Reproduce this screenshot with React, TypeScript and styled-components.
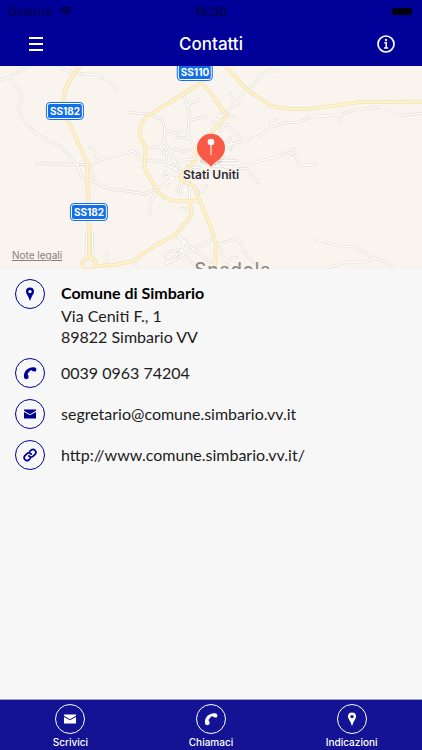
import React from "react";
import styled, { createGlobalStyle } from "styled-components";

const GlobalStyle = createGlobalStyle`
  *, *::before, *::after { box-sizing: border-box; }
  body { margin: 0; background: #f7f7f7; font-family: Inter, "Liberation Sans", sans-serif; }
`;

const Screen = styled.div`
  display: flex;
  flex-direction: column;
  min-height: 100vh;
`;

const Header = styled.header`
  background: #000099;
  color: #fff;
`;

const StatusBar = styled.div`
  display: grid;
  grid-template-columns: 1fr auto 1fr;
  align-items: center;
  height: 22px;
  padding: 0 8px;
  color: #000040;
  font-size: 12px;
`;

const Carrier = styled.span`
  display: flex;
  align-items: center;
  gap: 6px;
`;

const Clock = styled.time`
  font-weight: 600;
`;

const Battery = styled.span`
  justify-self: end;
  width: 20px;
  height: 7px;
  margin-right: 2px;
  border-radius: 2px;
  background: #000010;
`;

const NavBar = styled.div`
  display: grid;
  grid-template-columns: 44px 1fr 44px;
  align-items: center;
  height: 44px;
  padding: 0 14px;
`;

const NavButton = styled.button`
  display: flex;
  align-items: center;
  justify-content: center;
  height: 42px;
  padding: 0;
  border: 0;
  background: none;
  color: inherit;
`;

const Title = styled.h1`
  margin: 0;
  text-align: center;
  font-size: 17px;
  font-weight: 500;
  line-height: 42px;
`;

const MapArea = styled.section`
  position: relative;
  height: 203px;
  overflow: hidden;
  background: #f9f4ed;
`;

const MapDrawing = styled.svg`
  display: block;
  width: 100%;
  height: 100%;
`;

const Place = styled.div<{ $x: number; $y: number }>`
  position: absolute;
  left: calc(50% + ${(p) => p.$x}px);
  top: ${(p) => p.$y}px;
  transform: translate(-50%, -50%);
  white-space: nowrap;
`;

const RoadBadge = styled(Place)`
  padding: 0 2px;
  border: 1px solid #fff;
  border-radius: 3px;
  outline: 1px solid #1470e8;
  background: #1470e8;
  color: #fff;
  font-size: 10px;
  font-weight: 700;
  line-height: 14px;
`;

const Town = styled(Place)`
  color: #8f8b88;
  font-size: 18px;
  font-weight: 500;
  line-height: 20px;
  letter-spacing: 1px;
`;

const PinLabel = styled(Place)`
  color: #2b2b30;
  font-size: 12px;
  font-weight: 600;
  line-height: 14px;
  text-shadow: 0 0 2px #fff, 0 0 2px #fff;
`;

const LegalLink = styled.a`
  position: absolute;
  left: 12px;
  bottom: 7px;
  color: #85827e;
  font-size: 10px;
  font-weight: 400;
  line-height: 14px;
`;

const Details = styled.main`
  display: flex;
  flex: 1;
  flex-direction: column;
  gap: 11px;
  padding: 10px 15px;
`;

const Row = styled.div`
  display: flex;
  gap: 16px;
  color: #1c1c1c;
  font-family: Lato, "Liberation Sans", sans-serif;
  font-size: 16px;
  line-height: 21px;
`;

const Circle = styled.span`
  display: flex;
  flex: none;
  align-items: center;
  justify-content: center;
  width: 30px;
  height: 30px;
  border: 1px solid currentColor;
  border-radius: 50%;
`;

const RowIcon = styled(Circle)`
  color: #000099;
`;

const Address = styled.address`
  padding-top: 1px;
  font-style: normal;
`;

const Name = styled.h2`
  margin: 0;
  color: #000;
  font-size: 16px;
  font-weight: 700;
  line-height: 25px;
`;

const ContactLink = styled.a`
  color: inherit;
  line-height: 30px;
  text-decoration: none;
`;

const TabBar = styled.nav`
  display: grid;
  grid-template-columns: repeat(3, 1fr);
  height: 51px;
  border-top: 1px solid #9c9cc4;
  background: #131394;
`;

const Tab = styled.button`
  display: flex;
  flex-direction: column;
  align-items: center;
  gap: 1px;
  padding: 4px 0 0;
  border: 0;
  background: none;
  color: #fff;
  font-family: inherit;
  font-size: 10px;
  font-weight: 500;
  line-height: 14px;
`;

const WifiIcon = () => (
  <svg width="14" height="10" viewBox="0 0 14 10" fill="none" stroke="currentColor" strokeWidth="2" aria-hidden="true">
    <path d="M1 4a8.500 8.500 0 0 1 12 0M3.200 6.200a5.400 5.400 0 0 1 7.600 0" />
    <path d="M7 9.500 5 7.700a2.900 2.900 0 0 1 4 0z" fill="currentColor" stroke="none" />
  </svg>
);

const MenuIcon = () => (
  <svg width="14" height="14" viewBox="0 0 14 14" stroke="currentColor" strokeWidth="2" aria-hidden="true">
    <path d="M0 1h14M0 7h14M0 13h14" />
  </svg>
);

const InfoIcon = () => (
  <svg width="18" height="18" viewBox="0 0 18 18" fill="none" stroke="currentColor" aria-hidden="true">
    <circle cx="9" cy="9" r="8" strokeWidth="1.700" />
    <path d="M7.300 7.800h1.900v5M7 13h4.200" strokeWidth="1.500" />
    <circle cx="9" cy="5" r="1.200" fill="currentColor" stroke="none" />
  </svg>
);

const PinIcon = () => (
  <svg width="14" height="14" viewBox="0 0 14 14" fill="currentColor" aria-hidden="true">
    <path fillRule="evenodd" d="M7 .5a4 4 0 0 0-4 4C3 6.500 4.600 8 5.500 10.200L7 14l1.500-3.800C9.400 8 11 6.500 11 4.500a4 4 0 0 0-4-4zm0 2.400a1.700 1.700 0 1 1 0 3.400 1.700 1.700 0 0 1 0-3.400z" />
  </svg>
);

const PhoneIcon = () => (
  <svg width="14" height="14" viewBox="0 0 14 14" fill="currentColor" aria-hidden="true">
    <path d="M1.200 12C.3 8.500 1.800 5.200 4.500 3.100 6.700 1.400 9.800.6 12 1.500c1.300.6 1.700 2 1.100 3.200-.4.800-1 1-1.700.8l-2-.6c-.6-.2-.8-.6-1-1C6.600 4.900 5 6.600 4.400 8.300c.5.200.8.500.9 1l.3 1.700c.1.900-.3 1.500-1 1.800-1.200.6-2.900.4-3.400-.8z" />
  </svg>
);

const MailIcon = () => (
  <svg width="14" height="14" viewBox="0 0 14 14" fill="currentColor" aria-hidden="true">
    <path d="M1 2.500h12v1.200L7 7.200 1 3.700z" />
    <path d="M1 4.900l6 3.400 6-3.400v6.600H1z" />
  </svg>
);

const LinkIcon = () => (
  <svg width="14" height="14" viewBox="0 0 24 24" fill="none" stroke="currentColor" strokeWidth="3" strokeLinecap="round" aria-hidden="true">
    <path d="M10 13.500a5 5 0 0 0 7.500.5l3.500-3.500a5 5 0 0 0-7-7L11.500 6" />
    <path d="M14 10.500a5 5 0 0 0-7.500-.5L3 13.500a5 5 0 0 0 7 7l2.500-2.500" />
  </svg>
);

const lanes = [
  "M90 -3 L28 33 C35 58 68 66 66 98 L54 130 C76 190 130 222 184 242 L235 302 L244 335 L285 350 L325 368 L433 383 L468 370 L525 334",
  "M28 33 L0 42",
  "M178 0 C205 25 240 21 295 27 L345 62 L345 73",
  "M110 293 L275 296 L295 284 L400 255 L430 284 L500 286",
  "M268 245 L283 250 L295 283",
  "M272 305 L285 350 M233 302 L245 335",
  "M390 140 L440 143 L485 158 L495 190 L492 225 L512 260 L530 300 L553 318",
  "M553 90 L568 140 L564 205 L584 245 L582 285",
  "M563 116 L598 101 M568 163 L617 152",
  "M492 193 L528 200 L565 190 M528 200 L526 218 M540 214 L572 218",
  "M437 247 L480 242 L495 262 L530 250 L550 258 L570 250 M480 242 L492 228",
  "M500 250 L500 300 L528 308 M515 265 L520 290 L545 282 L590 280",
  "M495 315 L520 340 L495 355 M510 300 L550 325 M520 340 L490 328",
  "M468 370 L450 415 L450 443",
  "M550 330 L530 375 M545 352 L540 383 M570 350 L568 405 M568 362 L610 375 M600 380 L620 360 M545 428 L570 430",
  "M525 507 L633 590 M525 507 L553 525 L545 550 L495 560 L500 594 L633 520",
  "M560 520 L540 560 L500 590 M545 552 L590 608",
  "M400 585 L418 609 M320 560 L321 590 M260 500 L258 585 M277 500 L279 585",
  "M832 16 C810 7 780 25 770 48 L738 72 L675 145 M690 80 L698 102 L714 115",
  "M675 145 L705 154 M675 145 L657 155 M670 140 L655 152",
  "M640 170 L675 175 L733 224 M675 175 L660 194",
  "M670 240 L733 224 L780 208 L818 182 L853 170 L900 168 L933 150 L1020 147 L1060 132 L1130 124 C1160 120 1170 147 1205 148 L1266 142",
  "M960 152 L1020 147 L1023 167 M813 185 L810 170 L828 158",
  "M690 215 L697 245 M680 225 L692 250",
  "M633 302 L720 300 L840 270 L857 255 L885 267 L900 297 L937 296 M877 265 L881 247",
  "M650 300 L650 284 L710 284 M663 270 L680 280 M675 305 L740 308 L775 350",
  "M892 290 C908 303 933 300 945 292",
  "M650 535 L708 520 C730 525 723 560 760 590 M655 535 L683 600 M680 585 L710 574",
  "M950 521 L1030 543 L1062 540 L1098 565 L1128 578 L1155 587 L1180 609",
  "M970 609 L1045 588 L1090 588 L1128 578",
  "M583 250 L600 260 M610 235 L620 220 M560 302 L600 305",
];

const mainRoads = [
  "M242 -3 C215 30 190 65 190 102 L205 165 L262 290 L262 330 L268 477 L268 575",
  "M605 50 L440 152 C418 175 410 205 430 230 L437 250 L433 305 L470 372 C490 395 505 404 530 405 L600 405 L633 487 L648 532 L645 609",
  "M605 50 L633 82 L680 148 L633 202 L590 245 L590 280 L553 318 L540 335 L545 345 L583 360 L600 405",
  "M673 -3 L738 68 L808 117 C825 126 840 126 865 128 L923 129 L1083 108 L1266 107",
  "M290 600 L345 596 L400 585 L460 542 L525 507 L575 447 L570 405",
  "M268 573 A20 20 0 1 1 267 573",
];

const MapRoads = () => (
  <MapDrawing viewBox="0 0 1266 609" preserveAspectRatio="xMidYMid slice" aria-hidden="true">
    <g fill="none" strokeLinecap="round" strokeLinejoin="round">
      <path d={lanes.join(" ")} stroke="#e2ddd7" strokeWidth="8" />
      <path d={lanes.join(" ")} stroke="#fffdfb" strokeWidth="4" />
      <path d={mainRoads.join(" ")} stroke="#efdfba" strokeWidth="11" />
      <path d={mainRoads.join(" ")} stroke="#fff2c5" strokeWidth="7" />
    </g>
    <ellipse cx="633" cy="285" rx="34" ry="12" fill="#000" opacity=".1" />
    <path d="M633 303C625 290 614 286 604 276 A42 42 0 1 1 662 276 C652 286 641 290 633 303z" fill="#fa5947" />
    <path d="M633 230v38" stroke="#ffd5cf" strokeWidth="4" />
    <circle cx="633" cy="228" r="10" fill="#fff" />
  </MapDrawing>
);

const contacts = [
  { href: "tel:0039096374204", text: "0039 0963 74204", Icon: PhoneIcon },
  { href: "mailto:segretario@comune.simbario.vv.it", text: "segretario@comune.simbario.vv.it", Icon: MailIcon },
  { href: "http://www.comune.simbario.vv.it/", text: "http://www.comune.simbario.vv.it/", Icon: LinkIcon },
];

const tabs = [
  { label: "Scrivici", Icon: MailIcon },
  { label: "Chiamaci", Icon: PhoneIcon },
  { label: "Indicazioni", Icon: PinIcon },
];

export default function App() {
  return (
    <>
      <GlobalStyle />
      <Screen>
        <Header>
          <StatusBar>
            <Carrier>
              Gestore <WifiIcon />
            </Carrier>
            <Clock>15:30</Clock>
            <Battery />
          </StatusBar>
          <NavBar>
            <NavButton aria-label="Menu">
              <MenuIcon />
            </NavButton>
            <Title>Contatti</Title>
            <NavButton aria-label="Informazioni">
              <InfoIcon />
            </NavButton>
          </NavBar>
        </Header>
        <MapArea aria-label="Mappa">
          <MapRoads />
          <RoadBadge $x={-16} $y={6}>SS110</RoadBadge>
          <RoadBadge $x={-146} $y={45}>SS182</RoadBadge>
          <RoadBadge $x={-122} $y={146}>SS182</RoadBadge>
          <PinLabel $x={0} $y={109}>Stati Uniti</PinLabel>
          <Town $x={22} $y={204}>Spadola</Town>
          <LegalLink href="#note-legali">Note legali</LegalLink>
        </MapArea>
        <Details>
          <Row>
            <RowIcon>
              <PinIcon />
            </RowIcon>
            <Address>
              <Name>Comune di Simbario</Name>
              Via Ceniti F., 1<br />
              89822 Simbario VV
            </Address>
          </Row>
          {contacts.map(({ href, text, Icon }) => (
            <Row key={href}>
              <RowIcon>
                <Icon />
              </RowIcon>
              <ContactLink href={href}>{text}</ContactLink>
            </Row>
          ))}
        </Details>
        <TabBar>
          {tabs.map(({ label, Icon }) => (
            <Tab key={label}>
              <Circle>
                <Icon />
              </Circle>
              {label}
            </Tab>
          ))}
        </TabBar>
      </Screen>
    </>
  );
}
